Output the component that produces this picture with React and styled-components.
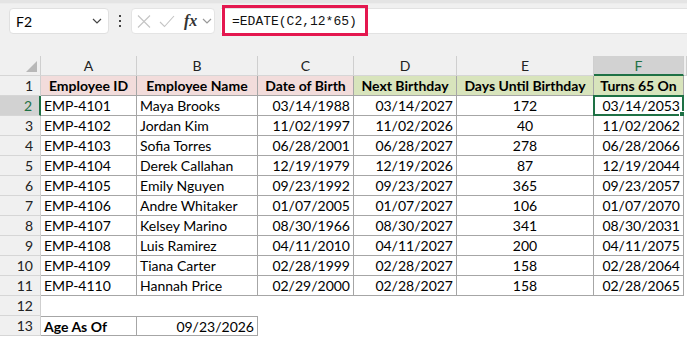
import React from 'react';
import styled, { createGlobalStyle } from 'styled-components';

const GlobalStyle = createGlobalStyle`
  html, body {
    margin: 0;
    padding: 0;
    background: #ffffff;
  }
  body {
    font-family: Lato, "Noto Sans", sans-serif;
    color: #000;
  }
`;

const COLS = '41px 96px 121px 96px 103px 137px 90px 1fr';

const Page = styled.div`
  width: 687px;
  height: 337px;
  overflow: hidden;
  background: #fff;
`;

const TopStrip = styled.div`
  height: 3px;
  background: #e4e4e4;
  border-bottom: 1px solid #ececec;
`;

const FormulaBar = styled.div`
  height: 37px;
  background: #f0f0f0;
  display: flex;
  align-items: flex-start;
  padding: 4px 0 0 9px;
  box-sizing: border-box;
`;

const NameBox = styled.div`
  width: 100px;
  height: 26px;
  box-sizing: border-box;
  background: #fff;
  border: 1px solid #e0e0e0;
  border-radius: 4px;
  display: flex;
  align-items: center;
  justify-content: space-between;
  padding: 0 6px 0 6px;
  font-size: 14px;
`;

const Dots = styled.div`
  width: 22px;
  height: 26px;
  display: flex;
  flex-direction: column;
  align-items: center;
  justify-content: center;
  gap: 3px;
  span {
    width: 2px;
    height: 2px;
    background: #444;
  }
`;

const FxBox = styled.div`
  width: 84px;
  height: 26px;
  box-sizing: border-box;
  background: #fff;
  border: 1px solid #e4e4e4;
  border-radius: 4px;
  display: flex;
  align-items: center;
  padding: 0 0 0 5px;
  gap: 8px;
`;

const FxText = styled.span`
  font-family: "Liberation Serif", serif;
  font-style: italic;
  font-weight: bold;
  font-size: 16px;
  color: #333;
  margin-left: 1px;
  margin-right: -3px;
`;

const FormulaInput = styled.div`
  position: relative;
  flex: 1;
  margin-left: 6px;
  height: 26px;
  box-sizing: border-box;
  background: #fff;
  border-top: 1px solid #e2e2e2;
  border-bottom: 1px solid #e2e2e2;
  display: flex;
  align-items: center;
  padding-left: 11px;
  font-family: "Liberation Mono", monospace;
  font-size: 13px;
  color: #111;
`;

const Highlight = styled.div`
  position: absolute;
  left: 1px;
  top: -4px;
  width: 146px;
  height: 31px;
  box-sizing: border-box;
  border: 3px solid #e4174f;
  pointer-events: none;
`;

const Gap = styled.div`
  height: 15px;
  background: #f0f0f0;
`;

const Row = styled.div`
  display: grid;
  grid-template-columns: ${COLS};
  height: 20px;
`;

const ColHead = styled.div`
  background: ${(p) => (p.$active ? '#d2d2d2' : '#f0f0f0')};
  border-right: 1px solid #cfcfcf;
  border-bottom: ${(p) => (p.$active ? '2px solid #1e7145' : '1px solid #d6d6d6')};
  box-sizing: border-box;
  display: flex;
  align-items: center;
  justify-content: center;
  font-size: 14px;
  color: ${(p) => (p.$active ? '#1e7145' : '#222')};
  position: relative;
`;

const Corner = styled(ColHead)`
  justify-content: flex-end;
  align-items: flex-end;
  padding: 0 3px 3px 0;
`;

const RowHead = styled.div`
  background: ${(p) => (p.$active ? '#d2d2d2' : '#f0f0f0')};
  border-right: ${(p) => (p.$active ? '2px solid #1e7145' : '1px solid #cfcfcf')};
  border-bottom: 1px solid #d6d6d6;
  box-sizing: border-box;
  display: flex;
  align-items: center;
  justify-content: flex-end;
  padding-right: 7px;
  font-size: 14px;
  color: ${(p) => (p.$active ? '#1e7145' : '#222')};
`;

const Cell = styled.div`
  position: relative;
  box-sizing: border-box;
  background: ${(p) => p.$bg || '#fff'};
  border-right: ${(p) => (p.$border ? '1px solid #a6a6a6' : 'none')};
  border-bottom: ${(p) => (p.$border ? '1px solid #a6a6a6' : 'none')};
  border-top: ${(p) => (p.$top ? '1px solid #a6a6a6' : 'none')};
  display: flex;
  align-items: center;
  justify-content: ${(p) => p.$align || 'flex-start'};
  padding: 0 3px;
  font-size: 14px;
  font-weight: ${(p) => (p.$bold ? 700 : 400)};
  white-space: nowrap;
  overflow: hidden;
`;

const Selection = styled.div`
  position: absolute;
  left: -1px;
  top: -1px;
  right: -1px;
  bottom: -1px;
  border: 2px solid #1e7145;
  pointer-events: none;
  &::after {
    content: '';
    position: absolute;
    right: -4px;
    bottom: -4px;
    width: 5px;
    height: 5px;
    background: #1e7145;
    border: 1px solid #fff;
  }
`;

const SelectedCell = styled(Cell)`
  overflow: visible;
`;

const PINK = '#f2dcdb';
const GREEN = '#d8e4bc';

const headers = [
  ['Employee ID', PINK],
  ['Employee Name', PINK],
  ['Date of Birth', PINK],
  ['Next Birthday', GREEN],
  ['Days Until Birthday', GREEN],
  ['Turns 65 On', GREEN],
];

const align = ['flex-start', 'flex-start', 'flex-end', 'flex-end', 'center', 'flex-end'];

const rows = [
  ['EMP-4101', 'Maya Brooks', '03/14/1988', '03/14/2027', '172', '03/14/2053'],
  ['EMP-4102', 'Jordan Kim', '11/02/1997', '11/02/2026', '40', '11/02/2062'],
  ['EMP-4103', 'Sofia Torres', '06/28/2001', '06/28/2027', '278', '06/28/2066'],
  ['EMP-4104', 'Derek Callahan', '12/19/1979', '12/19/2026', '87', '12/19/2044'],
  ['EMP-4105', 'Emily Nguyen', '09/23/1992', '09/23/2027', '365', '09/23/2057'],
  ['EMP-4106', 'Andre Whitaker', '01/07/2005', '01/07/2027', '106', '01/07/2070'],
  ['EMP-4107', 'Kelsey Marino', '08/30/1966', '08/30/2027', '341', '08/30/2031'],
  ['EMP-4108', 'Luis Ramirez', '04/11/2010', '04/11/2027', '200', '04/11/2075'],
  ['EMP-4109', 'Tiana Carter', '02/28/1999', '02/28/2027', '158', '02/28/2064'],
  ['EMP-4110', 'Hannah Price', '02/29/2000', '02/28/2027', '158', '02/28/2065'],
];

function Chevron({ color = '#444' }) {
  return (
    <svg width='10' height='6' viewBox='0 0 10 6'>
      <path d='M1 1 L5 5 L9 1' fill='none' stroke={color} strokeWidth='1.2' />
    </svg>
  );
}

function App() {
  return (
    <Page>
      <GlobalStyle />
      <TopStrip />
      <FormulaBar>
        <NameBox>
          <span>F2</span>
          <Chevron />
        </NameBox>
        <Dots>
          <span />
          <span />
          <span />
        </Dots>
        <FxBox>
          <svg width='14' height='13' viewBox='0 0 14 13'>
            <path d='M1 0.5 L13 12.5 M13 0.5 L1 12.5' stroke='#c4c4c4' strokeWidth='1.1' />
          </svg>
          <svg width='16' height='13' viewBox='0 0 16 13'>
            <path d='M1 7 L5.5 11.5 L15 1' fill='none' stroke='#c4c4c4' strokeWidth='1.1' />
          </svg>
          <FxText>fx</FxText>
          <Chevron color='#999' />
        </FxBox>
        <FormulaInput>
          =EDATE(C2,12*65)
          <Highlight />
        </FormulaInput>
      </FormulaBar>
      <Gap />
      <Row>
        <Corner>
          <svg width='11' height='11' viewBox='0 0 11 11'>
            <polygon points='11,0 11,11 0,11' fill='#b8b8b8' />
          </svg>
        </Corner>
        {['A', 'B', 'C', 'D', 'E', 'F'].map((c) => (
          <ColHead key={c} $active={c === 'F'}>
            {c}
          </ColHead>
        ))}
        <ColHead />
      </Row>
      <Row>
        <RowHead>1</RowHead>
        {headers.map(([h, bg]) => (
          <Cell key={h} $bg={bg} $border $bold $align='center'>
            {h}
          </Cell>
        ))}
        <Cell />
      </Row>
      {rows.map((r, i) => (
        <Row key={r[0]}>
          <RowHead $active={i === 0}>{i + 2}</RowHead>
          {r.map((v, j) =>
            i === 0 && j === 5 ? (
              <SelectedCell key={j} $border $align={align[j]}>
                {v}
                <Selection />
              </SelectedCell>
            ) : (
              <Cell key={j} $border $align={align[j]}>
                {v}
              </Cell>
            )
          )}
          <Cell />
        </Row>
      ))}
      <Row>
        <RowHead>12</RowHead>
      </Row>
      <Row>
        <RowHead>13</RowHead>
        <Cell $border $top $bold>
          Age As Of
        </Cell>
        <Cell $border $top $align='flex-end'>
          09/23/2026
        </Cell>
      </Row>
    </Page>
  );
}

export default App;
